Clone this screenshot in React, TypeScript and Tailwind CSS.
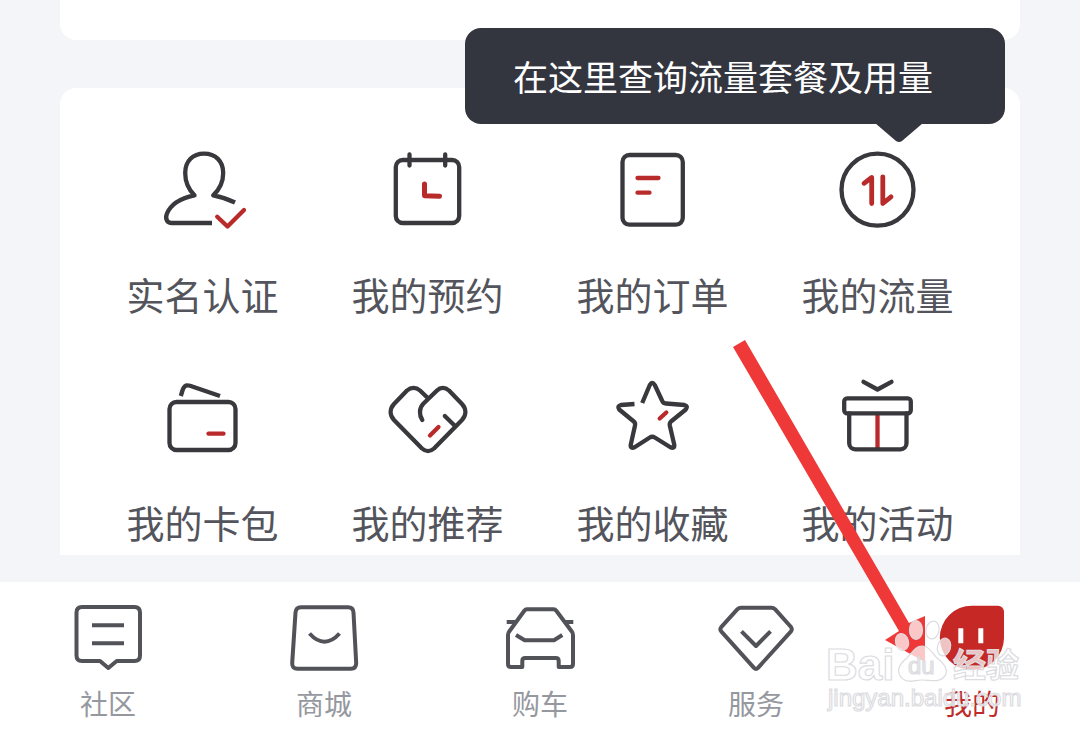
import type { ReactNode } from "react";

type Entry = { label: string; icon: ReactNode };

const RED = "#b92b2a";

function GridIcon({ children }: { children: ReactNode }) {
  return (
    <svg
      viewBox="0 0 96 96"
      className="size-24"
      fill="none"
      stroke="#38383d"
      strokeWidth="4.3"
      strokeLinecap="round"
      strokeLinejoin="round"
      aria-hidden="true"
    >
      {children}
    </svg>
  );
}

function TabIcon({ children }: { children: ReactNode }) {
  return (
    <svg
      viewBox="0 0 80 80"
      className="size-20"
      fill="none"
      stroke="#525259"
      strokeWidth="4"
      strokeLinejoin="round"
      aria-hidden="true"
    >
      {children}
    </svg>
  );
}

const entries: Entry[] = [
  {
    label: "实名认证",
    icon: (
      <GridIcon>
        <path
          strokeLinecap="butt"
          d="M57 81H17C12 81 10 77 11.8 72C16 61 26 56 39.5 53.3C33 47 30.2 39 30.2 31C30.2 19 38 11.7 49 11.7C60.5 11.7 68.2 19 68.2 31C68.2 39 65 47 58.2 53.3C67 55 73 57 80 60.5"
        />
        <path stroke={RED} d="M62.2 74.7L72.5 84.5L89 68" />
      </GridIcon>
    ),
  },
  {
    label: "我的预约",
    icon: (
      <GridIcon>
        <rect x="15.8" y="18" width="63.4" height="63" rx="7" />
        <path d="M29.5 12.5V23.5M65.2 12.5V23.5" />
        <path stroke={RED} strokeWidth="5" d="M44.5 42V53.7L59.5 54.3" />
      </GridIcon>
    ),
  },
  {
    label: "我的订单",
    icon: (
      <GridIcon>
        <rect x="17.5" y="13" width="60.3" height="69.7" rx="7" />
        <path stroke={RED} d="M32.5 36H53.5M32.5 50.7H44.5" />
      </GridIcon>
    ),
  },
  {
    label: "我的流量",
    icon: (
      <GridIcon>
        <circle cx="47.5" cy="47.7" r="36" />
        <path stroke={RED} strokeWidth="4.8" d="M34 41.3L41.7 35.5V61.5M52.8 34.8V61.5L61 54.8" />
      </GridIcon>
    ),
  },
  {
    label: "我的卡包",
    icon: (
      <GridIcon>
        <rect x="14.5" y="32" width="66" height="48" rx="7" />
        <path strokeLinecap="butt" d="M25.8 26L27.8 19.5C29 16 31.5 14.6 35 15.8L65 26" />
        <path stroke={RED} d="M53.5 63.7H68.5" />
      </GridIcon>
    ),
  },
  {
    label: "我的推荐",
    icon: (
      <GridIcon>
        <path d="M47.8 28L40 20.5C36 17 31 17 27 20.5L14 34C9.5 39 9.5 45 14 50L42 78.5C46 82 50 82 54 78.5L82 50C86.5 45 86.5 39 82 34L69 20.5C65 17 60.5 17 57 20.5L43.5 33.5C39 38 39 45 42.3 50" />
        <path d="M64.8 46L74.8 55.7" />
        <path stroke={RED} d="M58.5 57L50 65.5" />
      </GridIcon>
    ),
  },
  {
    label: "我的收藏",
    icon: (
      <GridIcon>
        <path
          strokeLinecap="butt"
          d="M37.2 33L44.8 15Q47.2 10.7 49.8 15L57 30.5Q58 33.3 61 33.5L79.5 35Q83.5 36 80.8 39.5L66 51.5Q64.3 53 64.8 55.5L69.3 75Q69.5 79.3 65 77L49.8 67.5Q47.2 66 44.8 67.5L30 77Q25.3 79.3 25.7 75L30 55.5Q30.6 53 28.8 51.5L14.2 39.5Q11.8 36 15.8 35L29.5 34"
        />
        <path stroke={RED} d="M61.3 42.5L54.7 48.5" />
      </GridIcon>
    ),
  },
  {
    label: "我的活动",
    icon: (
      <GridIcon>
        <path d="M33.5 11.8L47.5 19.5L61.5 11.8" />
        <path stroke={RED} strokeLinecap="butt" d="M47.5 45V78" />
        <rect x="14.2" y="28.3" width="66.6" height="15" rx="3" />
        <path d="M19.2 43.3V73.3A6 6 0 0 0 25.2 79.3H70.5A6 6 0 0 0 76.5 73.3V43.3" />
      </GridIcon>
    ),
  },
];

const tabs: Entry[] = [
  {
    label: "社区",
    icon: (
      <TabIcon>
        <path d="M14 10H66.5Q72 10 72 15.5V58.5Q72 64 66.5 64H48.7L40.3 71L32 64H14Q8.5 64 8.5 58.5V15.5Q8.5 10 14 10Z" />
        <path d="M24 28.3H56M24 46.3H56" />
      </TabIcon>
    ),
  },
  {
    label: "商城",
    icon: (
      <TabIcon>
        <path d="M17 10.2H64Q69.2 10.2 69.5 15.5L72.2 66Q72.2 71.7 67 71.7H13.5Q8 71.7 8.2 66L11.5 15.5Q12 10.2 17 10.2Z" />
        <path d="M25.5 36.5Q40.5 53 55.5 36.5" />
      </TabIcon>
    ),
  },
  {
    label: "购车",
    icon: (
      <TabIcon>
        <path d="M27 12.3H53.5Q55.3 12.3 56.3 13.8L71.8 34.5Q73 36 73 38V67Q73 70 70 70H58.7V64Q58.7 61 55.7 61H25.3Q22.3 61 22.3 64V70H11Q8 70 8 67V38Q8 36 9.2 34.5L24.3 13.8Q25.3 12.3 27 12.3Z" />
        <path d="M6.7 25H17M64 25H73.3M16 38L24.7 43.3H54L62.3 38" />
      </TabIcon>
    ),
  },
  {
    label: "服务",
    icon: (
      <TabIcon>
        <path d="M25 10.7H55.5Q57.5 10.7 59 12.2L75 30Q76.5 32.3 75 34.3L42 70.8Q40 72.8 38 70.8L5.2 34.3Q3.5 32.3 5.2 30.2L21.5 12.2Q23 10.7 25 10.7Z" />
        <path d="M25.5 34.3L40 49L54.5 34.3" />
      </TabIcon>
    ),
  },
  {
    label: "我的",
    icon: (
      <TabIcon>
        <path stroke="none" fill="#c62826" d="M40 8.7H66A6 6 0 0 1 72 14.7V41A32.1 32.1 0 1 1 40 8.7Z" />
        <path stroke="#fff" strokeWidth="5" d="M28.8 31.3V46.3M48.8 31.3V46.3" />
      </TabIcon>
    ),
  },
];

function Pointer() {
  return (
    <svg
      viewBox="0 0 200 330"
      className="pointer-events-none absolute top-[336px] right-[151px] h-[330px] w-[200px]"
      aria-hidden="true"
    >
      <path fill="#ef3838" d="M4 11L16 4L180 287L196 280V326L156 304L170 295Z" />
    </svg>
  );
}

function Watermark() {
  return (
    <svg
      viewBox="0 0 210 100"
      className="pointer-events-none absolute top-[615px] right-[50px] h-[100px] w-[210px]"
      fill="#fff"
      fillOpacity="0.72"
      stroke="#dcdce0"
      strokeWidth="1.2"
      fontFamily="'Liberation Sans', 'Noto Sans CJK SC', sans-serif"
    >
      <text x="6" y="65" fontSize="44" fontWeight="700">Bai</text>
      <ellipse cx="82" cy="27" rx="6.5" ry="8.5" transform="rotate(-15 82 27)" />
      <ellipse cx="96" cy="15" rx="6.5" ry="9.5" />
      <ellipse cx="112.5" cy="15" rx="6.5" ry="9" transform="rotate(12 112.5 15)" />
      <ellipse cx="124" cy="32" rx="6.5" ry="9" transform="rotate(15 124 32)" />
      <path d="M102 31C109 31 112 38 117 43C126 50 129 57 124 62C119 68 110 65 102 65C94 65 86 69 81 62C76 56 79 49 87 43C92 38 95 31 102 31Z" />
      <text x="88" y="59" fontSize="24" fontWeight="400" fill="#e4e4e8">du</text>
      <text x="133" y="62" fontSize="33" fontWeight="700">经验</text>
      <text x="8" y="91" fontSize="24">jingyan.baidu.com</text>
    </svg>
  );
}

export default function App() {
  return (
    <div className="relative flex min-h-screen flex-col bg-[#f4f5f8] font-['Noto_Sans_CJK_SC',sans-serif]">
      <main className="flex flex-1 flex-col gap-12 px-[60px] pb-[27px]">
        <section className="h-10 rounded-b-2xl bg-white" />
        <section className="relative rounded-t-2xl bg-white px-[30px] pt-[54px] pb-[10px]">
          <div className="grid grid-cols-4 gap-y-[53px]">
            {entries.map(({ label, icon }) => (
              <a
                key={label}
                href="#"
                className="flex flex-col items-center gap-[33px] text-[38px] leading-[46px] whitespace-nowrap text-[#53545c]"
              >
                {icon}
                <span>{label}</span>
              </a>
            ))}
          </div>
          <div
            role="tooltip"
            className="absolute -top-[60px] right-[15px] flex h-24 w-[540px] items-center rounded-2xl bg-[#34363f] px-12 text-[35px] whitespace-nowrap text-white"
          >
            在这里查询流量套餐及用量
            <svg viewBox="0 0 48 20" className="absolute top-[95px] right-[82px] h-5 w-12" aria-hidden="true">
              <path fill="#34363f" d="M0 0H48L27 18Q24 20 21 18Z" />
            </svg>
          </div>
        </section>
      </main>
      <nav className="grid grid-cols-5 bg-white pt-[15px] pb-[14px]">
        {tabs.map(({ label, icon }, i) => (
          <a
            key={label}
            href="#"
            aria-current={i === 4 ? "page" : undefined}
            className="flex flex-col items-center gap-2 text-[28px] leading-9 text-[#96989f] aria-[current=page]:text-[#bd2c2a]"
          >
            {icon}
            <span>{label}</span>
          </a>
        ))}
      </nav>
      <Pointer />
      <Watermark />
    </div>
  );
}
